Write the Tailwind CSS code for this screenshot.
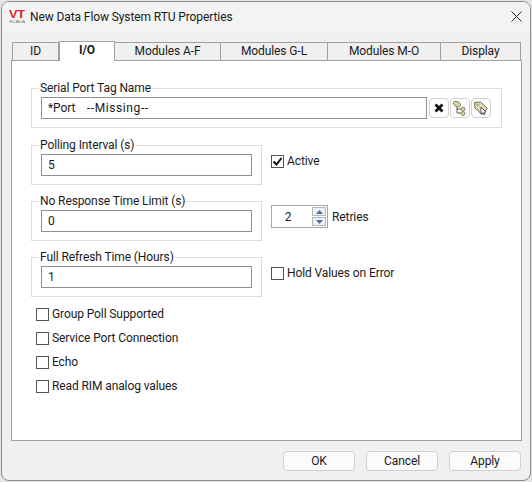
<!DOCTYPE html>
<html lang="en">
<head>
    <meta charset="UTF-8">
    <title>New Data Flow System RTU Properties</title>
    <script src="https://cdn.jsdelivr.net/npm/@tailwindcss/browser@4"></script>
</head>
<body class="bg-[#e4e4e4] w-[532px] h-[482px] overflow-hidden font-['Roboto','Noto_Sans',sans-serif] text-[12px] leading-[16px] tracking-[-0.1px] text-[#1a1a1a]">
    <div class="ml-px mt-px w-[530px] h-[480px] flex flex-col border border-[#8c8c8c] rounded-lg bg-[#f0f0f0] overflow-hidden">
        <!-- title bar -->
        <div class="h-[30px] shrink-0 bg-[#f3f3f3] flex items-center pl-[7px] pr-[8px]">
            <svg width="17" height="14" viewBox="0 0 17 14" class="mr-[4px]">
                <text x="0" y="8" font-family="Liberation Sans" font-weight="700" font-size="10" fill="#e0202a" textLength="16" lengthAdjust="spacingAndGlyphs">VT</text>
                <text x="0" y="13.2" font-family="Liberation Sans" font-size="3.2" fill="#777" textLength="16" lengthAdjust="spacingAndGlyphs">SCADA</text>
            </svg>
            <span class="flex-1">New Data Flow System RTU Properties</span>
            <svg width="11" height="11" viewBox="0 0 11 11" class="-mt-[2px]"><path d="M.5.5l10 10M10.5.5l-10 10" stroke="#222" fill="none"/></svg>
        </div>

        <div class="flex-1 flex flex-col px-[9px] pt-[9px]">
            <!-- tabs -->
            <div class="flex h-[19px] items-end pl-px relative z-10 text-center">
                <div class="w-[47px] h-[18px] border border-b-0 border-[#a0a0a0] bg-[#f0f0f0]">ID</div>
                <div class="w-[56px] h-[20px] -mb-px border border-b-0 border-[#a0a0a0] bg-white font-bold">I/O</div>
                <div class="w-[106px] h-[18px] border border-b-0 border-l-0 border-[#a0a0a0] bg-[#f0f0f0]">Modules A-F</div>
                <div class="w-[107px] h-[18px] border border-b-0 border-l-0 border-[#a0a0a0] bg-[#f0f0f0]">Modules G-L</div>
                <div class="w-[113px] h-[18px] border border-b-0 border-l-0 border-[#a0a0a0] bg-[#f0f0f0]">Modules M-O</div>
                <div class="w-[80px] h-[18px] border border-b-0 border-l-0 border-[#a0a0a0] bg-[#f0f0f0]">Display</div>
            </div>

            <!-- tab page -->
            <div class="w-[511px] h-[381px] border border-[#a0a0a0] bg-white pt-[27px] pl-[19px]">
                <div class="relative w-[471px] h-[40px] border border-[#dcdcdc] flex items-center pl-[9px]">
                    <span class="absolute -top-[9px] left-[7px] bg-white px-[1px]">Serial Port Tag Name</span>
                    <div class="w-[386px] h-[22px] border border-[#8f8f8f] pl-[6px] flex items-center whitespace-pre">*Port    <span class="tracking-[0.6px]">--Missing--</span></div>
                    <div class="ml-[2px] w-[20px] h-[20px] border border-[#d0d0d0] rounded-[4px] flex items-center justify-center">
                        <svg width="10" height="10" viewBox="0 0 10 10"><path d="M1.5 1.5l7 7M8.5 1.5l-7 7" stroke="#111" stroke-width="2.8" fill="none"/></svg>
                    </div>
                    <div class="ml-px w-[20px] h-[20px] border border-[#d0d0d0] rounded-[4px] flex items-center justify-center">
                        <svg width="16" height="16" viewBox="0 0 16 16">
                            <path d="M1 3l2-2 4 1 2 3-2 2-4-1z" fill="#d8d2a0" stroke="#8a8760"/>
                            <path d="M5 7v6h4M5 9h4" stroke="#555" fill="none"/>
                            <circle cx="11" cy="9" r="2" fill="#d8d2a0" stroke="#8a8760"/>
                            <circle cx="11" cy="13.5" r="2" fill="#d8d2a0" stroke="#8a8760"/>
                        </svg>
                    </div>
                    <div class="ml-px w-[20px] h-[20px] border border-[#d0d0d0] rounded-[4px] flex items-center justify-center">
                        <svg width="16" height="16" viewBox="0 0 16 16">
                            <path d="M1.5 2.5l6-.5 7 6.5-5.5 6-7-6.5z" fill="#e0dbb0" stroke="#6f6c50"/>
                            <circle cx="5" cy="5" r="1" fill="#fff" stroke="#6f6c50" stroke-width=".6"/>
                            <path d="M8 7l5 5-2 .3 1 2-1 .5-1-2-2 1.2z" fill="#fff" stroke="#333" stroke-width=".8"/>
                        </svg>
                    </div>
                </div>

                <div class="mt-[17px] flex items-center">
                    <div class="relative w-[231px] h-[40px] border border-[#dcdcdc] flex items-center pl-[9px]">
                        <span class="absolute -top-[9px] left-[7px] bg-white px-[1px]">Polling Interval (s)</span>
                        <div class="w-[211px] h-[22px] border border-[#8f8f8f] pl-[6px] flex items-center">5</div>
                    </div>
                    <div class="ml-[9px] -mt-[8px] flex items-center">
                        <div class="w-[13px] h-[13px] border border-[#555] flex items-center justify-center">
                            <svg width="11" height="11" viewBox="0 0 11 11"><path d="M1.5 5.5l3 3 5-6.5" stroke="#111" stroke-width="2" fill="none"/></svg>
                        </div>
                        <span class="ml-[3px]">Active</span>
                    </div>
                </div>

                <div class="mt-[16px] flex items-center">
                    <div class="relative w-[231px] h-[40px] border border-[#dcdcdc] flex items-center pl-[9px]">
                        <span class="absolute -top-[9px] left-[7px] bg-white px-[1px]">No Response Time Limit (s)</span>
                        <div class="w-[211px] h-[22px] border border-[#8f8f8f] pl-[6px] flex items-center">0</div>
                    </div>
                    <div class="ml-[9px] -mt-[9px] flex items-center">
                        <div class="w-[57px] h-[23px] border border-[#a8a8a8] flex items-center pr-[1px]">
                            <span class="flex-1 text-center pr-[8px]">2</span>
                            <div class="w-[14px] flex flex-col gap-[1px]">
                                <div class="h-[9px] border border-[#b5b5b5] bg-[#eef1f6] flex items-center justify-center">
                                    <svg width="7" height="4" viewBox="0 0 7 4"><path d="M3.5 0l3.5 4H0z" fill="#4f6d9c"/></svg>
                                </div>
                                <div class="h-[9px] border border-[#b5b5b5] bg-[#eef1f6] flex items-center justify-center">
                                    <svg width="7" height="4" viewBox="0 0 7 4"><path d="M0 0h7L3.5 4z" fill="#4f6d9c"/></svg>
                                </div>
                            </div>
                        </div>
                        <span class="ml-[4px]">Retries</span>
                    </div>
                </div>

                <div class="mt-[16px] flex items-center">
                    <div class="relative w-[231px] h-[40px] border border-[#dcdcdc] flex items-center pl-[9px]">
                        <span class="absolute -top-[9px] left-[7px] bg-white px-[1px]">Full Refresh Time (Hours)</span>
                        <div class="w-[211px] h-[22px] border border-[#8f8f8f] pl-[6px] flex items-center">1</div>
                    </div>
                    <div class="ml-[9px] -mt-[8px] flex items-center">
                        <div class="w-[13px] h-[13px] border border-[#555]"></div>
                        <span class="ml-[3px]">Hold Values on Error</span>
                    </div>
                </div>

                <div class="mt-[9px] ml-[5px] flex flex-col gap-[8px]">
                    <div class="flex items-center"><div class="w-[13px] h-[13px] border border-[#555]"></div><span class="ml-[3px]">Group Poll Supported</span></div>
                    <div class="flex items-center"><div class="w-[13px] h-[13px] border border-[#555]"></div><span class="ml-[3px]">Service Port Connection</span></div>
                    <div class="flex items-center"><div class="w-[13px] h-[13px] border border-[#555]"></div><span class="ml-[3px]">Echo</span></div>
                    <div class="flex items-center"><div class="w-[13px] h-[13px] border border-[#555]"></div><span class="ml-[3px]">Read RIM analog values</span></div>
                </div>
            </div>

            <!-- dialog buttons -->
            <div class="flex justify-end gap-[11px] pt-[10px]">
                <div class="w-[72px] h-[20px] border border-[#d0d0d0] rounded-[4px] bg-[#fbfbfb] flex items-center justify-center">OK</div>
                <div class="w-[72px] h-[20px] border border-[#d0d0d0] rounded-[4px] bg-[#fbfbfb] flex items-center justify-center">Cancel</div>
                <div class="w-[72px] h-[20px] border border-[#d0d0d0] rounded-[4px] bg-[#fbfbfb] flex items-center justify-center">Apply</div>
            </div>
        </div>
    </div>
</body>
</html>
